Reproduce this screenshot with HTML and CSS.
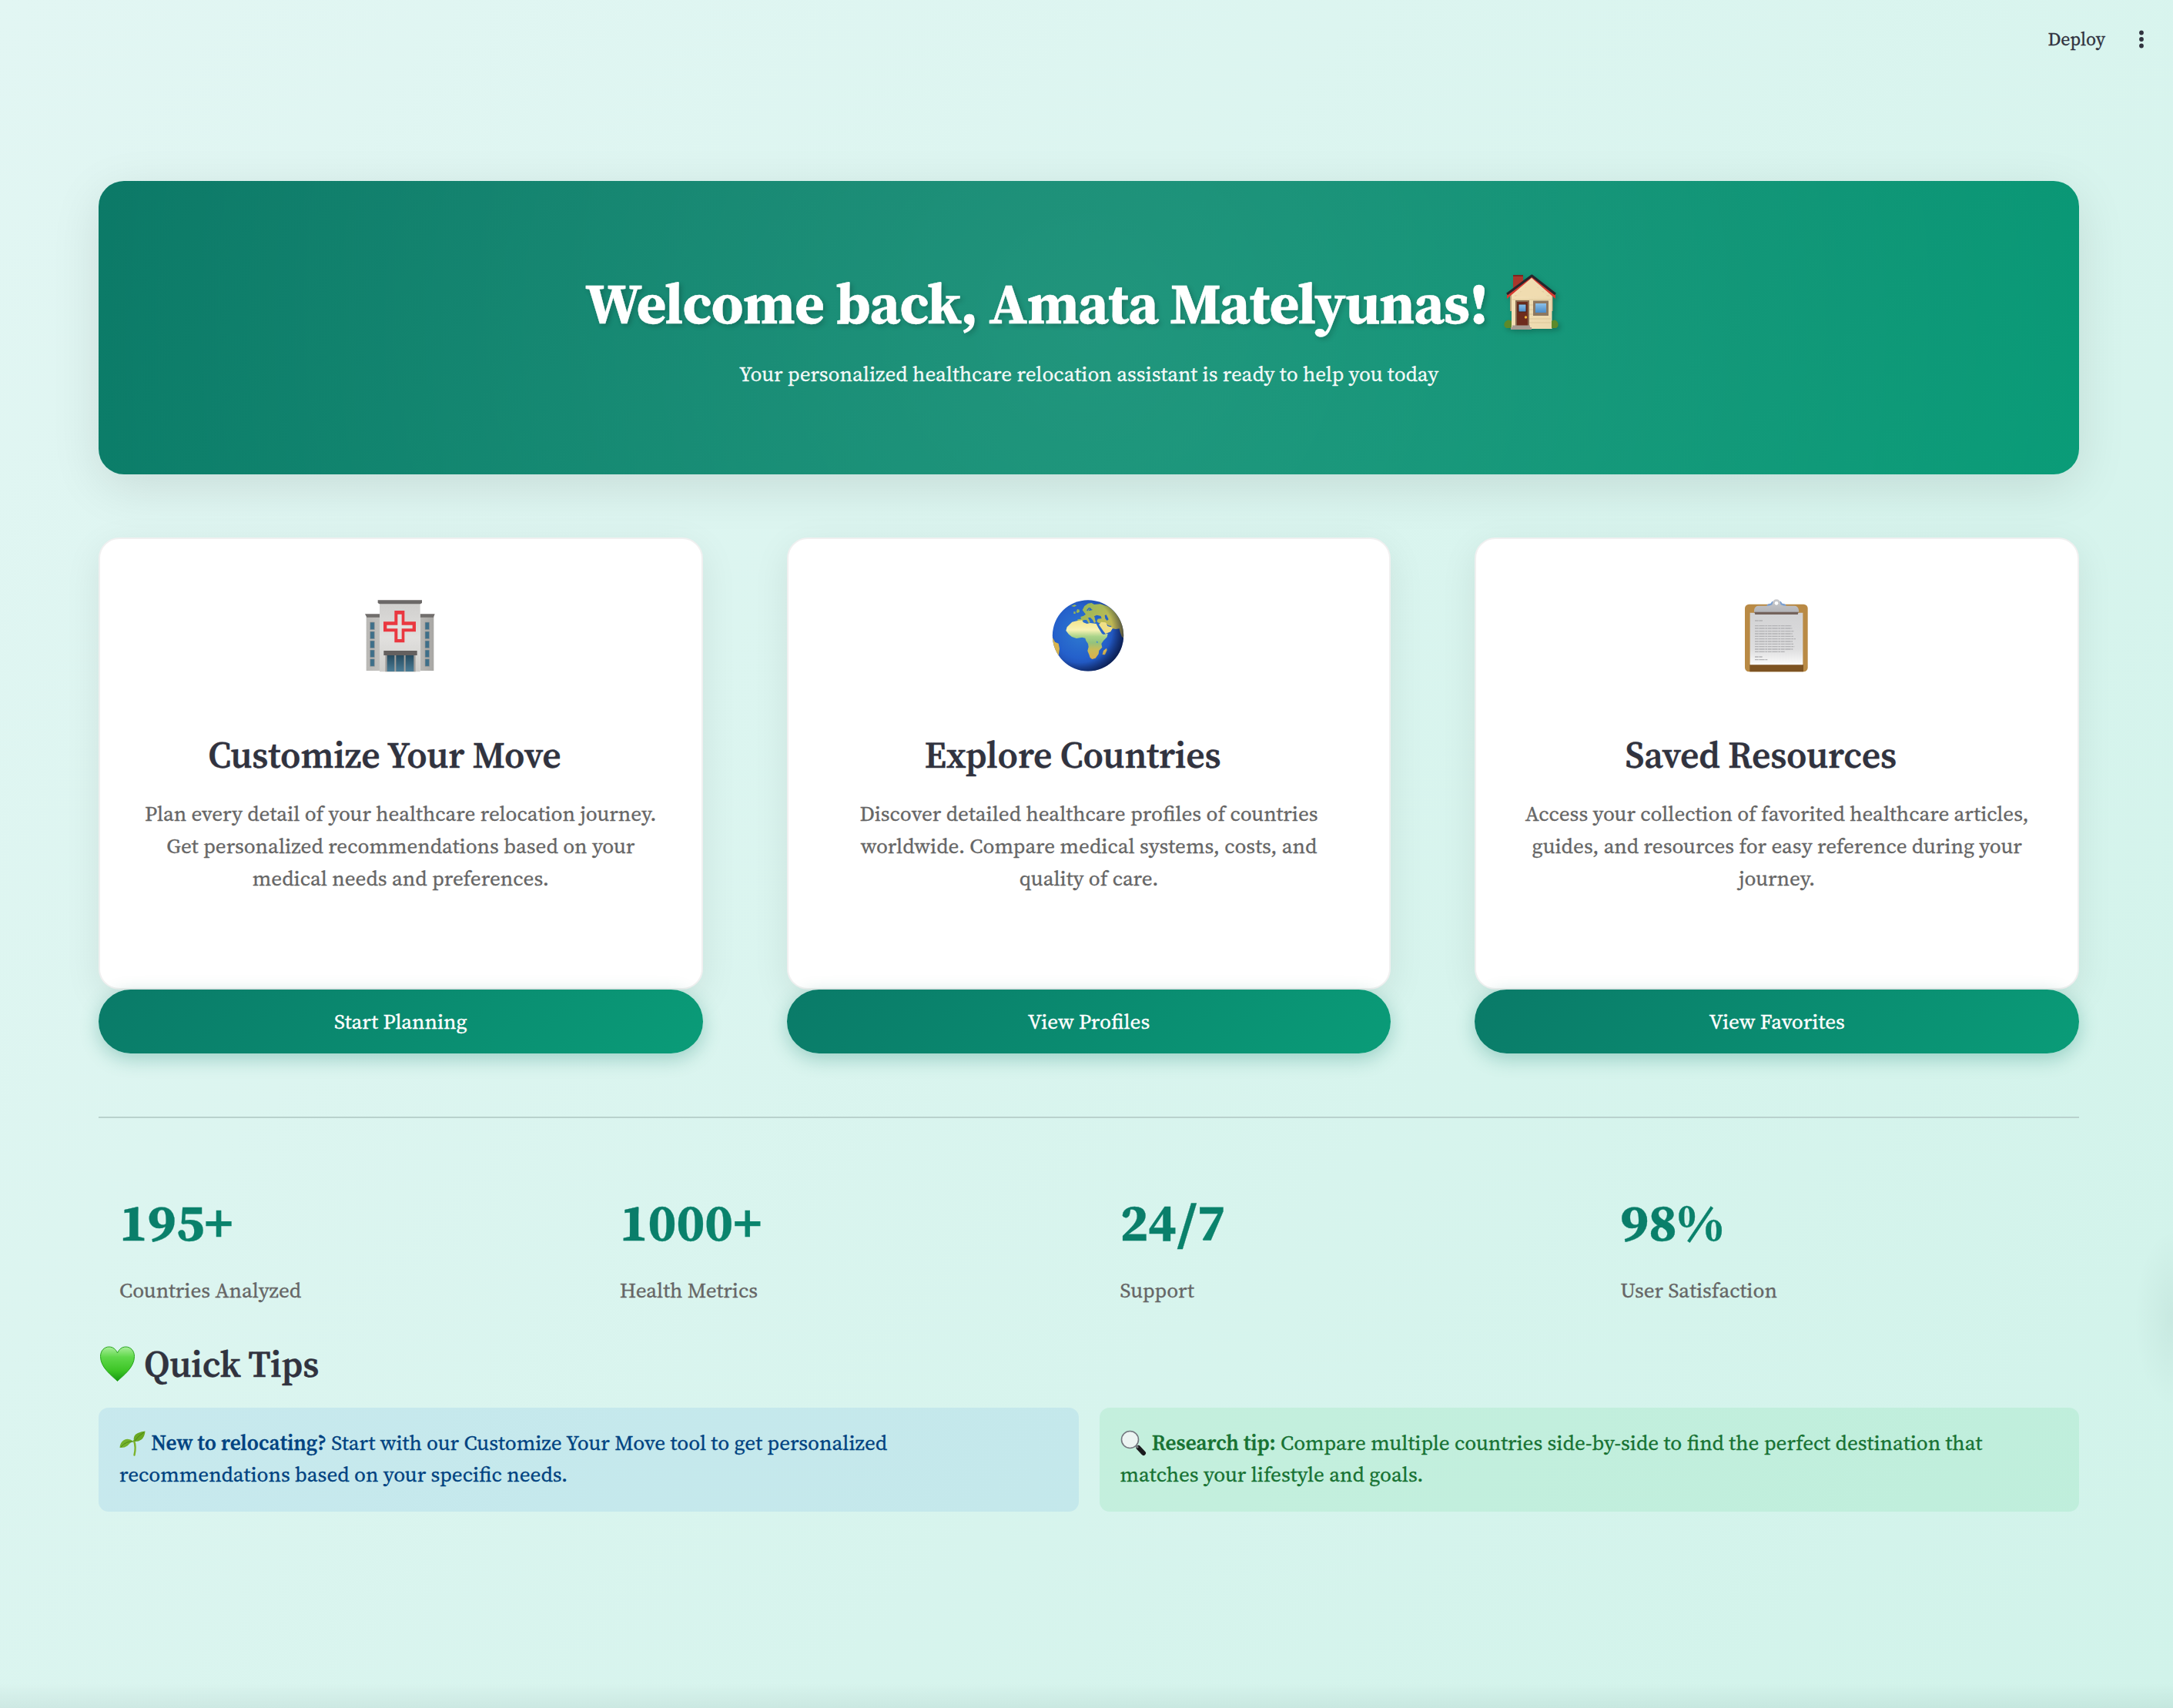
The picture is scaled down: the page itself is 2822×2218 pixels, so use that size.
FILE: index.html
```
<!DOCTYPE html>
<html lang="en">
<head>
<meta charset="utf-8">
<title>Healthcare Relocation Assistant</title>
<link rel="stylesheet" href="styles.css">
</head>
<body>
<header class="topbar">
  <span class="deploy">Deploy</span>
  <svg class="menu-dots" viewBox="0 0 12 28" aria-hidden="true"><circle cx="6" cy="5.5" r="2.9"/><circle cx="6" cy="14" r="2.9"/><circle cx="6" cy="22.5" r="2.9"/></svg>
</header>

<main class="page">
  <section class="hero">
    <h1 class="hero-title"><span>Welcome back, Amata Matelyunas!</span>
      <svg class="house" viewBox="0 0 76 78" aria-hidden="true">
        <defs>
          <linearGradient id="wall" x1="0" x2="1"><stop offset="0" stop-color="#f3dfb4"/><stop offset="1" stop-color="#ecd9ae"/></linearGradient>
          <linearGradient id="pane" x1="0" y1="0" x2="0" y2="1"><stop offset="0" stop-color="#8cc0e8"/><stop offset="1" stop-color="#4a8bc9"/></linearGradient>
        </defs>
        <path fill="#a8372c" d="M15 5h13v14L15 30z"/><path fill="#7c251f" d="M15 5h13v2H15z"/>
        <path fill="#b9a27a" d="M11 30h55.500v22H11z"/>
        <path fill="url(#wall)" d="M13 30 39 8l26.500 22v45H13z"/>
        <path stroke="#d8c394" stroke-width=".8" d="M31 22h17M24 27h31M17 32h45M14 37h50M35 44h6M35 50h6M35 56h6M35 62h29M35 67h29"/>
        <path fill="#d63a31" d="M39 9 70 36V29L39 6 7 29v7z"/>
        <path fill="#f0dcb0" d="M39 15 60 33H18z"/>
        <path fill="none" stroke="#26262c" stroke-width="3" stroke-linejoin="round" d="M7 30 39.300 6 70 30"/>
        <path fill="#8a6c51" d="M18 38h18v34H18z"/><path fill="#6e2c1d" d="M20 40h14v31H20z"/>
        <path fill="url(#pane)" stroke="#4d2116" stroke-width="1" d="M22 43h10v10H22z"/><circle cx="31.500" cy="60" r="1.700" fill="#f2b53b"/>
        <path fill="#8d7860" d="M41 38.500h20V58H41z"/><path fill="url(#pane)" d="M44 42h14v12H44z"/>
        <path fill="#5d8a2b" d="M4 67q4-6 9-2v9H6q-4-2-2-7z"/><path fill="#5d8a2b" d="M65 65q5-4 8 2 2 5-2 7h-6z"/>
        <path fill="#a79c91" d="M14 70.500h23v2.500h2v3H12v-3h2z"/>
      </svg>
    </h1>
    <p class="hero-sub">Your personalized healthcare relocation assistant is ready to help you today</p>
  </section>

  <section class="cards">
    <div class="card-col">
      <article class="card">
        <svg class="card-icon" viewBox="93 84 288 288" aria-hidden="true">
          <defs>
            <linearGradient id="side" x1="0" x2="1"><stop offset="0" stop-color="#b9b8b5"/><stop offset=".5" stop-color="#d0cfcc"/><stop offset="1" stop-color="#a8a7a4"/></linearGradient>
            <linearGradient id="front" x1="0" x2="0" y1="0" y2="1"><stop offset="0" stop-color="#d0cfcd"/><stop offset=".5" stop-color="#e1e0de"/><stop offset="1" stop-color="#cfcecb"/></linearGradient>
            <linearGradient id="glass" x1="0" x2="0" y1="0" y2="1"><stop offset="0" stop-color="#25495d"/><stop offset="1" stop-color="#4a7c96"/></linearGradient>
          </defs>
          <path fill="url(#side)" d="M107 156h52v210h-52zM317 156h53v210h-53z"/>
          <path fill="#716e6c" d="M102 145h57v13h-50zM317 145h57l-5 13h-52z"/>
          <path fill="url(#front)" d="M159 104h158v266H159z"/>
          <path fill="#6b6867" d="M152 91h172v11l-6 4H158l-6-4z"/>
          <path fill="#ea3840" d="M217 132h39v43h44v39h-44v42h-39v-42h-43v-39h43z"/>
          <path fill="#e1e0de" d="M229 146h16v42h42v14h-42v41h-16v-41h-42v-14h42z"/>
          <g fill="#3e6f89" stroke="#9d9c99" stroke-width="2"><path d="M122 177h17v29h-17zM122 213h17v29h-17zM122 249h17v29h-17zM122 285h17v29h-17zM122 320h17v29h-17zM336 177h17v29h-17zM336 213h17v29h-17zM336 249h17v29h-17zM336 285h17v29h-17zM336 320h17v29h-17z"/></g>
          <path fill="#a3a09d" d="M181 304h118v66H181z"/>
          <path fill="url(#glass)" d="M188 304h29v65h-29zM223 304h31v65h-31zM260 304h32v65h-32z"/>
          <path fill="#64605f" d="M175 288h130v18H175z"/>
        </svg>
        <h3 class="card-title">Customize Your Move</h3>
        <p class="card-text">Plan every detail of your healthcare relocation journey. Get personalized recommendations based on your medical needs and preferences.</p>
      </article>
      <button class="btn">Start Planning</button>
    </div>
    <div class="card-col">
      <article class="card">
        <svg class="card-icon" viewBox="76 84 288 288" aria-hidden="true">
          <defs>
            <radialGradient id="sea" cx=".4" cy=".45" r=".62"><stop offset="0" stop-color="#2f7bd0"/><stop offset=".6" stop-color="#2460cb"/><stop offset="1" stop-color="#1b3f9e"/></radialGradient>
            <radialGradient id="night" cx=".38" cy=".42" r=".66"><stop offset=".7" stop-color="#04102e" stop-opacity="0"/><stop offset="1" stop-color="#04102e" stop-opacity=".75"/></radialGradient>
            <linearGradient id="land" x1="0" x2="0" y1="0" y2="1"><stop offset="0" stop-color="#f1e48c"/><stop offset=".25" stop-color="#f8f2b4"/><stop offset=".42" stop-color="#a9d389"/><stop offset=".58" stop-color="#94c27c"/><stop offset=".75" stop-color="#c9bc58"/><stop offset="1" stop-color="#dcae4c"/></linearGradient>
            <linearGradient id="eurasia" x1="0" x2="1" y1="0" y2="1"><stop offset="0" stop-color="#8fb65a"/><stop offset=".5" stop-color="#b9ba55"/><stop offset="1" stop-color="#cdb555"/></linearGradient>
            <clipPath id="disc"><circle cx="220" cy="229" r="138.500"/></clipPath>
          </defs>
          <circle cx="220" cy="229" r="138.500" fill="url(#sea)"/>
          <g clip-path="url(#disc)">
            <path fill="url(#eurasia)" d="M198 130l8-16 14-10 14-2 10 6 24-2 32 10 26 22 22 34 14 40-4 26-6-4-6-16-4-16-14 2-18-4-12-8-12-12-10 2-14-2-8-6 4-10 16-2-8-8-14 0-6 8 4 14-6 4-6-12-10-10-8 2 8 16-4 6-10-14-10 0-8 6-4 6-12-2-1-12 14-2-2-8 12-4 8-6z"/>
            <path fill="#efdf86" d="M262 186l10-10 16 2 10 10 18 12-8 14-20 8-8-10-10-14z"/>
            <path fill="url(#land)" d="M158 176l18-4 20-3 6 9 14 5 12-3 24 3 8 16 14 22 6 4 17-4-3 14-14 14-8 12 3 14-12 12-2 14-12 16-13 4-8-6-4-12-6-14 4-16-2-12-8-12-3-10-12-3-22 4-18-6-12-10-11-14 4-14 10-10z"/>
            <path fill="#d9b54e" d="M280 288l12-10 2 8-8 18-10-1zM83 238l8 16 14 6 4 20-4 30-8-2-18-40z"/>
            <path fill="#2562c6" d="M244 154l10-5 16 4 1 6-14 3-11-2zM285 150l6-2 9 18-6 5-7-8z"/>
            <path fill="#2562c6" d="M292 183l8 7 12 2-4 4-12-4z"/>
            <path fill="#9ab654" d="M174 138l4-12 8 2 1 9-8 4zM164 136h7v8h-7zM154 114l14-5 8 3-10 5z"/>
            <path fill="none" stroke="#2562c6" stroke-width="4" d="M216 132l8-10 6 2-4 6 10-2"/>
            <path fill="#4a92c9" d="M254 250l5 4-2 5-5-3z"/>
          </g>
          <circle cx="220" cy="229" r="138.500" fill="url(#night)"/>
        </svg>
        <h3 class="card-title">Explore Countries</h3>
        <p class="card-text">Discover detailed healthcare profiles of countries worldwide. Compare medical systems, costs, and quality of care.</p>
      </article>
      <button class="btn">View Profiles</button>
    </div>
    <div class="card-col">
      <article class="card">
        <svg class="card-icon" viewBox="87 84 288 288" aria-hidden="true">
          <defs>
            <linearGradient id="sheet" x1="0" x2="0" y1="0" y2="1"><stop offset="0" stop-color="#d2d2d4"/><stop offset=".7" stop-color="#dededf"/><stop offset="1" stop-color="#fbfbfb"/></linearGradient>
            <linearGradient id="metal" x1="0" x2="0" y1="0" y2="1"><stop offset="0" stop-color="#c9cacd"/><stop offset="1" stop-color="#b3b4b8"/></linearGradient>
          </defs>
          <rect x="108" y="107" width="245" height="263" rx="16" fill="#b98a45"/>
          <path fill="#7d5322" d="M127 342h209v28H127z"/>
          <path fill="url(#sheet)" d="M128 140h206v203H128z"/>
          <path fill="#7b9fd0" d="M192 116q2-12 16-12l6-8h34l6 8q14 0 16 12z"/>
          <path fill="url(#metal)" d="M144 138v-8q2-17 18-17h40q14-2 14-10 2-15 15-15t15 15q0 8 14 10h40q16 0 18 17v8z"/>
          <path fill="#74635c" d="M145 137h172l-3 10H148z"/>
          <circle cx="231" cy="103" r="7" fill="#fff"/>
          <path fill="none" stroke="#b2b2b5" stroke-width="4" stroke-dasharray="14 2 22 2 9 2" d="M147 171h30M147 191h143M147 201h145M147 212h152M147 222h146M147 232h150M147 242h159M147 252h147M147 262h150M147 272h154M147 282h148M147 292h116M147 312h29M147 323h49"/>
        </svg>
        <h3 class="card-title">Saved Resources</h3>
        <p class="card-text">Access your collection of favorited healthcare articles, guides, and resources for easy reference during your journey.</p>
      </article>
      <button class="btn">View Favorites</button>
    </div>
  </section>

  <hr class="divider">

  <section class="stats">
    <div class="stat"><div class="stat-value">195+</div><div class="stat-label">Countries Analyzed</div></div>
    <div class="stat"><div class="stat-value">1000+</div><div class="stat-label">Health Metrics</div></div>
    <div class="stat"><div class="stat-value">24/7</div><div class="stat-label">Support</div></div>
    <div class="stat"><div class="stat-value">98%</div><div class="stat-label">User Satisfaction</div></div>
  </section>

  <h3 class="tips-title">
    <svg class="heart" viewBox="0 0 48 48" aria-hidden="true">
      <defs><linearGradient id="leaf" x1="0" x2="0" y1="0" y2="1"><stop offset="0" stop-color="#a9ee9a"/><stop offset=".3" stop-color="#5fd84a"/><stop offset=".7" stop-color="#3cc425"/><stop offset="1" stop-color="#169a12"/></linearGradient></defs>
      <path fill="url(#leaf)" stroke="#27a41c" stroke-width="1" d="M24.500 46.500C17 39 2.500 29 2.500 14.500 2.500 6.500 8 2 13.500 2c5 0 9 3 11 8 2-5 6-8 11-8C41 2 46.500 6.500 46.500 14.500 46.500 29 32 39 24.500 46.500z"/>
    </svg>Quick Tips</h3>
  <section class="tips">
    <p class="tip tip-info"><svg class="tip-icon" viewBox="0 0 34 34" aria-hidden="true"><path fill="none" stroke="#7db32c" stroke-width="2.400" stroke-linecap="round" d="M19.500 32.500Q22 22 19 14"/><path fill="#69a823" d="M19 15Q17 7 24 4q5-2.500 9.500-2.500Q33 9 28.500 12.500q-4 3-9.500 2.500z"/><path fill="#75b22c" d="M18 14.500Q12 10 6 13 1 16 .500 23q6 .500 10-2.500 4-4.500 7.500-6z"/><path fill="none" stroke="#4c8716" stroke-width="1" d="M20 14Q25 7 32 3M18 15Q9 14 2 22"/></svg> <strong>New to relocating?</strong> Start with our Customize Your Move tool to get personalized recommendations based on your specific needs.</p>
    <p class="tip tip-success"><svg class="tip-icon" viewBox="0 0 34 34" aria-hidden="true"><path stroke="#1b1b1e" stroke-width="6" stroke-linecap="round" d="M23.500 23l6.500 7"/><path stroke="#77777d" stroke-width="2.500" d="M19 19l4 4"/><circle cx="12.500" cy="12.500" r="11" fill="#ecf4f2" stroke="#73777f" stroke-width="1.600"/></svg> <strong>Research tip:</strong> Compare multiple countries side-by-side to find the perfect destination that matches your lifestyle and goals.</p>
  </section>
</main>
</body>
</html>
```
FILE: styles.css
```
* { box-sizing: border-box; }

body {
  margin: 0;
  min-height: 2218px;
  font-family: "Source Serif 4", "Liberation Serif", serif;
  font-size: 27.2px;
  color: #31333f;
  -webkit-text-stroke: .3px currentColor;
  background:
    radial-gradient(ellipse 50px 115px at 100% 1712px, rgba(0, 40, 35, .05), rgba(0, 40, 35, 0)),
    linear-gradient(to top, rgba(0, 40, 35, .06), rgba(0, 40, 35, 0) 32px),
    linear-gradient(135deg, #e2f6f3, #d1f3ea);
}

h1, h3, p { margin: 0; }

.topbar {
  display: flex;
  justify-content: flex-end;
  align-items: center;
  height: 102px;
  padding-right: 35px;
  gap: 41px;
}
.deploy { font-size: 23.8px; line-height: 40px; }
.menu-dots { width: 12px; height: 28px; fill: #31333f; }

.page { padding: 133px 122px 0 128px; }

.hero {
  height: 381px;
  padding-top: 113px;
  border-radius: 33px;
  color: #fff;
  text-align: center;
  background:
    radial-gradient(circle 1300px at 50% 50%, rgba(255, 255, 255, .09), rgba(255, 255, 255, 0)),
    linear-gradient(135deg, #0c7967, #0a9c78);
  box-shadow: 0 16px 64px rgba(0, 0, 0, .1);
}
.hero-title {
  display: flex;
  justify-content: center;
  padding-right: 42px;
  gap: 17px;
  font-size: 74.8px;
  font-weight: 700;
  line-height: 92px;
  letter-spacing: -.84px;
  text-shadow: 3px 3px 6px rgba(0, 0, 0, .2);
}
.house { width: 76px; height: 78px; margin-top: 4px; filter: drop-shadow(3px 3px 3px rgba(0, 0, 0, .2)); }
.hero-sub { margin-top: 24px; line-height: 44px; color: rgba(255, 255, 255, .95); }

.cards {
  display: grid;
  grid-template-columns: repeat(3, 1fr);
  gap: 109px;
  margin-top: 82px;
}
.card-col { display: flex; flex-direction: column; }
.card {
  height: 587px;
  padding: 77px 50px 0;
  border: 2px solid #f0f0f0;
  border-radius: 27px;
  background: #fff;
  text-align: center;
  box-shadow: 0 13px 48px rgba(0, 0, 0, .08);
}
.card-icon { display: block; width: 96px; height: 96px; margin: 0 auto; transform: translateX(-1px); }
.card-title {
  margin-top: 80px;
  padding-right: 42px;
  font-size: 47.6px;
  font-weight: 600;
  line-height: 56px;
  letter-spacing: -.005em;
}
.card-text { margin-top: 27px; line-height: 42.2px; color: #666; }
.btn {
  height: 83px;
  padding: 0 0 1px;
  border: 0;
  border-radius: 42px;
  font: inherit;
  color: #fff;
  background: linear-gradient(135deg, #0a7a68, #0a9c78);
  box-shadow: 0 7px 24px rgba(10, 122, 104, .3);
}

.divider { height: 2px; margin: 82px 0 0; border: 0; background: #b9d2cd; }

.stats {
  display: grid;
  grid-template-columns: repeat(4, 1fr);
  gap: 27px;
  margin-top: 86px;
}
.stat { padding-left: 27px; }
.stat-value {
  font-size: 68px;
  font-weight: 700;
  line-height: 100px;
  background: linear-gradient(135deg, #0a7a68, #0a9c78);
  -webkit-background-clip: text;
  background-clip: text;
  color: transparent;
}
.stat-label { margin-top: 17px; line-height: 41px; color: #666; }

.tips-title {
  display: flex;
  gap: 11px;
  margin-top: 48px;
  font-size: 47.6px;
  font-weight: 600;
  line-height: 56px;
  letter-spacing: -.005em;
}
.heart { width: 48px; height: 48px; margin-top: 3px; }

.tips {
  display: grid;
  grid-template-columns: repeat(2, 1fr);
  gap: 27px;
  margin-top: 28px;
}
.tip {
  height: 135px;
  padding: 26px 27px 0;
  border-radius: 13px;
  line-height: 40.8px;
}
.tip strong { font-weight: 600; }
.tip-icon { width: 34px; height: 34px; margin-right: 1px; vertical-align: -8px; }
.tip-info { color: #004280; background: rgba(28, 131, 225, .1); }
.tip-success { color: #177233; background: rgba(33, 195, 84, .1); }
```
